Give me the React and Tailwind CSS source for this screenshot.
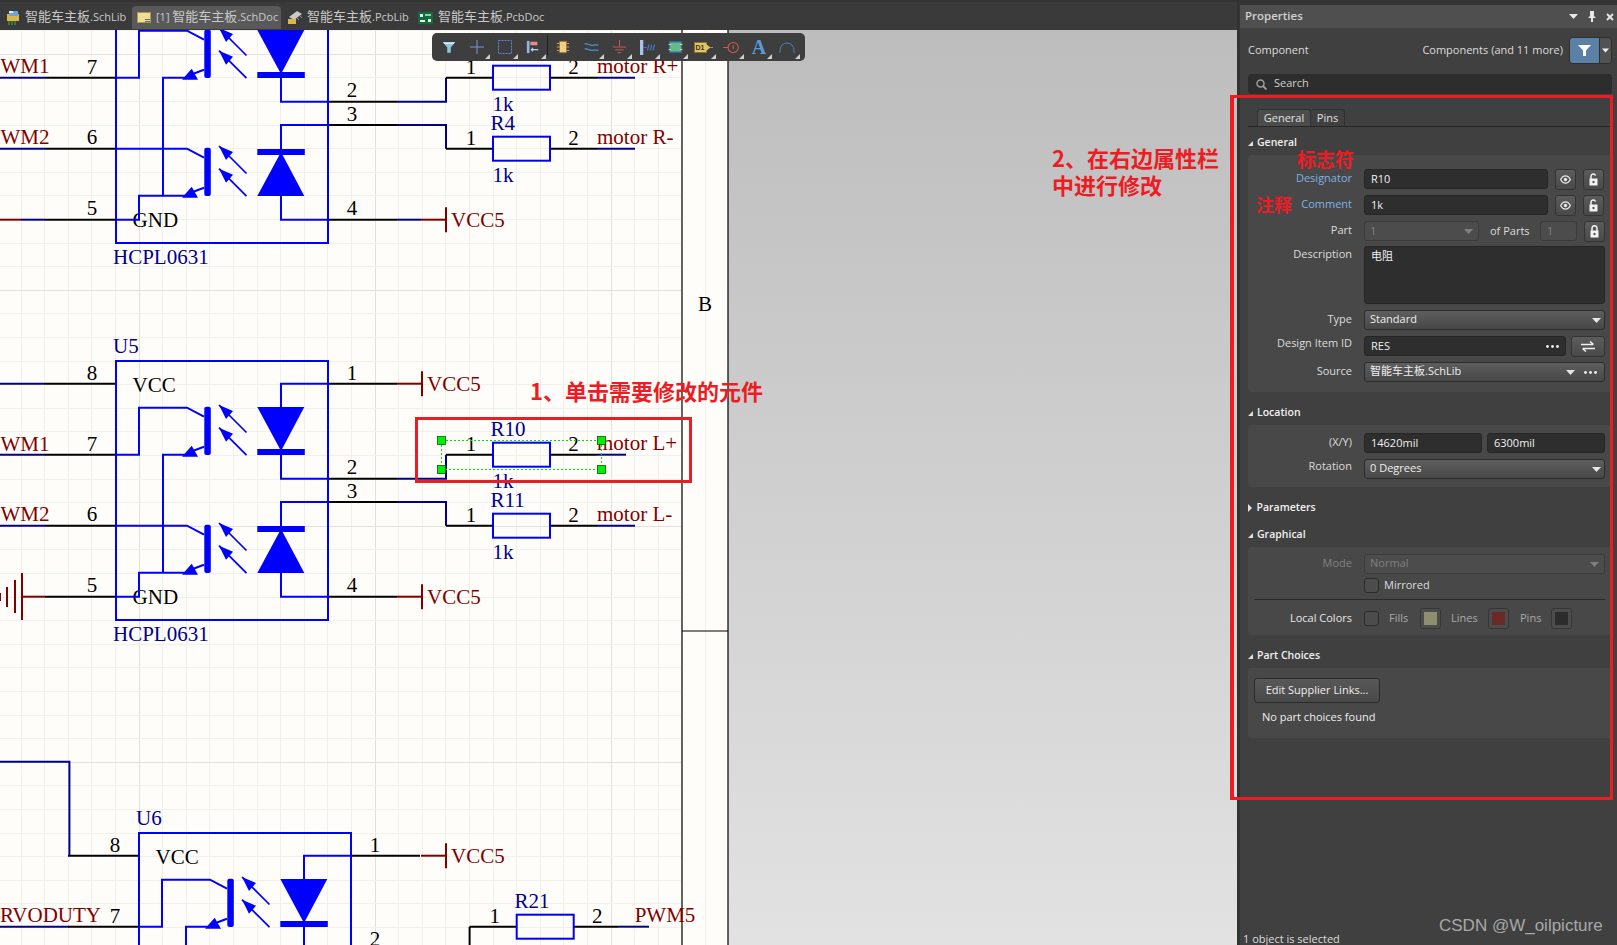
import { Fragment } from 'react'

const serif = { fontFamily: '"Liberation Serif", serif' }
const NAVY = '#00008b'
const BLUE = '#0000ff'
const RED = '#800000'

function W({ p, c = '#000000', w = 2 }) {
  return <polyline points={p} fill="none" stroke={c} strokeWidth={w} />
}

function T({ x, y, c = '#000000', a = 'start', s = 21, children }) {
  return <text x={x} y={y} fill={c} fontSize={s} textAnchor={a} style={serif}>{children}</text>
}

function Grid() {
  const xs = []
  const ys = []
  for (let i = -1; i < 31; i++) xs.push(21 + i * 23.6)
  for (let i = 0; i < 40; i++) ys.push(7 + i * 23.6)
  return (
    <g shapeRendering="crispEdges">
      {xs.map((x, i) => <line key={i} x1={x} x2={x} y1="30" y2="945" stroke={i % 10 === 6 ? '#e2e1dc' : '#f1f0ea'} />)}
      {ys.map((y, i) => <line key={i} x1="0" x2="682" y1={y} y2={y} stroke={i % 10 === 2 ? '#e2e1dc' : '#f1f0ea'} />)}
    </g>
  )
}

function LightArrow({ x, y }) {
  return (
    <g>
      <line x1={x} y1={y} x2={x + 27.5} y2={y + 27.5} stroke={BLUE} strokeWidth="1.7" />
      <polygon points={`${x},${y} ${x + 14},${y + 6} ${x + 7},${y + 14}`} fill={BLUE} />
    </g>
  )
}

function Opto({ dx = 0, dy = 0, name }) {
  return (
    <g transform={`translate(${dx} ${dy})`}>
      {[383.7, 454.7, 525.7, 596.7].map((y) => <W key={y} p={`45,${y} 116,${y}`} />)}
      {[383.7, 478.7, 502, 596.7].map((y) => <W key={y} p={`328,${y} 397,${y}`} />)}
      <rect x="116" y="361" width="212" height="259" fill="none" stroke={BLUE} strokeWidth="2" />
      <T x="92" y="380" a="middle">8</T>
      <T x="92" y="450.7" a="middle">7</T>
      <T x="92" y="521" a="middle">6</T>
      <T x="92" y="592" a="middle">5</T>
      <T x="352" y="380" a="middle">1</T>
      <T x="352" y="474" a="middle">2</T>
      <T x="352" y="498" a="middle">3</T>
      <T x="352" y="592" a="middle">4</T>
      <T x="132.6" y="392">VCC</T>
      <T x="132.6" y="604">GND</T>
      {name && <T x="113" y="353" c={NAVY}>{name}</T>}
      <T x="113" y="640.7" c={NAVY}>HCPL0631</T>

      {/* upper transistor */}
      <W c={BLUE} p="116,454.7 139,454.7 139,407.7 187,407.7 204,416.7" />
      <rect x="204.3" y="406.7" width="6.5" height="48.3" rx="2" fill={BLUE} />
      <W c={BLUE} p="163,572.7 163,454.7 186,454.7" />
      <W c={BLUE} p="190,452 204,446.7" />
      <polygon points="182,456.7 191.7,445.7 198,456.7" fill={BLUE} />
      <LightArrow x={219} y={405} />
      <LightArrow x={219} y={427.7} />

      {/* lower transistor */}
      <W c={BLUE} p="116,525.7 187,525.7 204,534.7" />
      <rect x="204.3" y="524.7" width="6.5" height="48.3" rx="2" fill={BLUE} />
      <W c={BLUE} p="116,596.7 139,596.7 139,572.7 186,572.7" />
      <W c={BLUE} p="190,570 204,564.7" />
      <polygon points="182,574.7 191.7,563.7 198,574.7" fill={BLUE} />
      <LightArrow x={219} y={523} />
      <LightArrow x={219} y={545.7} />

      {/* photodiodes */}
      <W c={BLUE} p="328,383.7 281,383.7 281,407.7" />
      <polygon points="257.3,407 304.3,407 281,451" fill={BLUE} />
      <rect x="257.3" y="449" width="47.5" height="6" fill={BLUE} />
      <W c={BLUE} p="281,454 281,478.7 328,478.7" />
      <W c={BLUE} p="328,502 281,502 281,527" />
      <rect x="257.3" y="526" width="47.5" height="6" fill={BLUE} />
      <polygon points="281,529 304.3,573 257.3,573" fill={BLUE} />
      <W c={BLUE} p="281,572 281,596.7 328,596.7" />
    </g>
  )
}

function Res({ x, y, name, value = '1k', net, netX, blackEnd, end, nameX }) {
  return (
    <g>
      <W p={`${x - 47},${y} ${x},${y}`} />
      <W p={`${x + 57},${y} ${blackEnd},${y}`} />
      <W c={NAVY} p={`${blackEnd},${y} ${end},${y}`} />
      <rect x={x} y={y - 12} width="57" height="24" fill="none" stroke={BLUE} strokeWidth="2" />
      <T x={x - 22} y={y - 4} a="middle">1</T>
      <T x={x + 80.5} y={y - 4} a="middle">2</T>
      <T x={nameX ?? x - 2.5} y={y - 18.7} c={NAVY}>{name}</T>
      <T x={x - 0.5} y={y + 33.5} c={NAVY}>{value}</T>
      <T x={netX} y={y - 5} c={RED}>{net}</T>
    </g>
  )
}

function Vcc({ x, y }) {
  return (
    <g>
      <W c={RED} p={`${x - 25},${y} ${x},${y}`} />
      <W c={RED} p={`${x},${y - 12.5} ${x},${y + 12.5}`} />
      <T x={x + 5} y={y + 7} c={RED}>VCC5</T>
    </g>
  )
}

function Schematic() {
  return (
    <svg width="729" height="915" viewBox="0 30 729 915" className="block shrink-0">
      <rect x="0" y="30" width="728" height="915" fill="#fffdf9" />
      <Grid />
      <line x1="682" x2="682" y1="30" y2="945" stroke="#000" strokeWidth="1.2" />
      <line x1="728" x2="728" y1="30" y2="945" stroke="#000" strokeWidth="1.2" />
      <line x1="682" x2="728" y1="631" y2="631" stroke="#000" strokeWidth="1.2" />
      <T x="705" y="311" a="middle">B</T>

      {/* first block */}
      <Opto dy={-377} />
      <W c={NAVY} p="0,77.7 45,77.7" />
      <W c={NAVY} p="0,148.7 45,148.7" />
      <W c={RED} p="0,219.7 21,219.7" />
      <W c={NAVY} p="21,219.7 45,219.7" />
      <T x="0.5" y="72.7" c={RED}>WM1</T>
      <T x="0.5" y="144" c={RED}>WM2</T>
      <W c={NAVY} p="397,101.7 446,101.7 446,77.7" />
      <W c={NAVY} p="397,125 446,125 446,148.7" />
      <W c={NAVY} p="397,219.7 421,219.7" />
      <Vcc x={446} y={219.7} />
      <Res x={493} y={77.7} name="R3" net="motor R+" netX={597} blackEnd={597} end={635} />
      <Res x={493} y={148.7} name="R4" net="motor R-" netX={597} blackEnd={597} end={635} />

      {/* U5 */}
      <Opto name="U5" />
      <W c={NAVY} p="0,383.7 45,383.7" />
      <W c={NAVY} p="0,454.7 45,454.7" />
      <W c={NAVY} p="0,525.7 45,525.7" />
      <W c={RED} p="22,596.7 45,596.7" />
      <T x="0.5" y="450.7" c={RED}>WM1</T>
      <T x="0.5" y="521" c={RED}>WM2</T>
      <line x1="22" x2="22" y1="573" y2="620" stroke={RED} strokeWidth="2" />
      <line x1="15" x2="15" y1="580" y2="613" stroke={RED} strokeWidth="2" />
      <line x1="7" x2="7" y1="587" y2="607" stroke={RED} strokeWidth="2" />
      <line x1="0" x2="0" y1="593" y2="601" stroke={RED} strokeWidth="2" />
      <Vcc x={422} y={383.7} />
      <Vcc x={422} y={596.7} />
      <W c={NAVY} p="397,478.7 446,478.7 446,454.7" />
      <W c={NAVY} p="397,502 446,502 446,525.7" />
      <Res x={493} y={454.7} name="R10" net="motor L+" netX={597} blackEnd={597} end={626} />
      <Res x={493} y={525.7} name="R11" net="motor L-" netX={597} blackEnd={597} end={635} />

      {/* selection of R10 */}
      <rect x="441.5" y="440.5" width="160" height="29" fill="none" stroke="#00e000" strokeWidth="1" strokeDasharray="2 2" shapeRendering="crispEdges" />
      {[[441.5, 440.5], [601.5, 440.5], [441.5, 469.5], [601.5, 469.5]].map(([x, y]) => (
        <rect key={`${x}-${y}`} x={x - 4} y={y - 4} width="8" height="8" fill="#00f000" stroke="#006000" strokeWidth="0.8" />
      ))}

      {/* U6 */}
      <Opto dx={23} dy={472} name="U6" />
      <W c={NAVY} p="0,761.7 69.4,761.7 69.4,855.7" />
      <W c={NAVY} p="0,926.7 69,926.7" />
      <T x="0" y="921.7" c={RED}>RVODUTY</T>
      <Vcc x={446} y={855.7} />
      <W p="469.6,945 469.6,926.7" />
      <Res x={516.7} y={926.7} name="R21" nameX={514.4} net="PWM5" netX={634.7} blackEnd={618} end={649} />
    </svg>
  )
}

function Corner() {
  return (
    <svg width="5" height="5" viewBox="0 0 5 5" className="absolute right-[1px] bottom-[2px]">
      <polygon points="5,0 5,5 0,5" fill="#cfcfcf" />
    </svg>
  )
}

function ToolBtn({ corner = true, children }) {
  return (
    <div className="relative w-[28px] h-[28px] flex items-center justify-center">
      {children}
      {corner && <Corner />}
    </div>
  )
}

function Toolbar() {
  return (
    <div className="absolute left-[432px] top-[3px] w-[373px] h-[28px] pl-[3px] flex rounded-[5px] bg-[#3e3e3e]">
      <ToolBtn corner={false}>
        <svg width="14" height="13" viewBox="0 0 16 14"><path d="M1 1h14L10 7v6H6V7z" fill="#8fc6dc" /><path d="M1 1h14l-2 2H3z" fill="#d4ecf5" /></svg>
      </ToolBtn>
      <ToolBtn>
        <svg width="16" height="16" viewBox="0 0 16 16"><path d="M8 1v14M1 8h14" stroke="#6f9bdc" strokeWidth="1" fill="none" /></svg>
      </ToolBtn>
      <ToolBtn>
        <svg width="16" height="16" viewBox="0 0 16 16"><rect x="1.5" y="1.5" width="13" height="13" fill="none" stroke="#5d86dc" strokeWidth="1" strokeDasharray="2 1" /></svg>
      </ToolBtn>
      <ToolBtn>
        <svg width="14" height="14" viewBox="0 0 16 16"><rect x="1" y="1" width="3" height="14" fill="#8fb6e6" /><rect x="5" y="2" width="8" height="4" fill="#e98a8a" /><path d="M14 11H6M8 9l-2 2 2 2" stroke="#b9d4ef" strokeWidth="1.2" fill="none" /></svg>
      </ToolBtn>
      <div className="w-[2px] flex items-center"><div className="w-[1px] h-[20px] mt-[-4px] bg-[#1f1f1f]" /></div>
      <ToolBtn corner={false}>
        <svg width="16" height="14" viewBox="0 0 16 16"><rect x="4" y="1.5" width="8" height="13" fill="#f2cf82" stroke="#8d7434" /><path d="M1 4h3M1 8h3M1 12h3M12 4h3M12 8h3M12 12h3" stroke="#c8a24c" strokeWidth="1.2" /></svg>
      </ToolBtn>
      <ToolBtn>
        <svg width="17" height="12" viewBox="0 0 18 14"><path d="M1 3c4 0 5 2 8 2s4-1 8 0M1 9c4 0 5 2 8 2s4-1 8 0" stroke="#4f92cc" strokeWidth="1.5" fill="none" /></svg>
      </ToolBtn>
      <ToolBtn>
        <svg width="15" height="15" viewBox="0 0 16 16"><path d="M8 0v7M1 7.5h14M3.5 10.5h9M6 13.5h4" stroke="#d8564e" strokeWidth="1" fill="none" /></svg>
      </ToolBtn>
      <ToolBtn>
        <svg width="17" height="15" viewBox="0 0 18 16"><rect x="1" y="0" width="3.5" height="16" fill="#a4c6ee" /><path d="M5 8h3M9 11l1.5-6M12 11l1.5-6M15 11l1.5-6" stroke="#4a78c8" strokeWidth="1.3" fill="none" /></svg>
      </ToolBtn>
      <ToolBtn>
        <svg width="15" height="12" viewBox="0 0 16 14"><rect x="1" y="1" width="14" height="12" fill="#64b98a" stroke="#2f6fae" strokeWidth="1.5" /><path d="M0 4h3M0 10h3M13 4h3M13 10h3" stroke="#e6d27c" strokeWidth="1.2" /></svg>
      </ToolBtn>
      <ToolBtn>
        <div className="flex items-center">
          <div className="w-[13px] h-[11px] bg-[#e2c465] border border-[#8d7434] text-[7px] leading-[9px] font-bold text-[#3a2f10] text-center [font-family:'Liberation_Sans',sans-serif]">D1</div>
          <svg width="7" height="9" viewBox="0 0 8 10" className="-ml-px"><polygon points="0,1 5,5 0,9" fill="#e2c465" /><path d="M5 5h3" stroke="#c8a24c" /></svg>
        </div>
      </ToolBtn>
      <ToolBtn>
        <svg width="17" height="13" viewBox="0 0 20 14"><circle cx="12" cy="7" r="6" fill="none" stroke="#d8564e" strokeWidth="1.2" /><path d="M0 7h6M12 4v5" stroke="#d8564e" strokeWidth="1.2" /></svg>
      </ToolBtn>
      <ToolBtn>
        <span className="text-[20px] leading-none font-bold text-[#5a9ad8] [font-family:'Liberation_Serif',serif]">A</span>
      </ToolBtn>
      <ToolBtn>
        <svg width="16" height="12" viewBox="0 0 16 12"><path d="M1 12V9a7 7 0 0 1 14 0v3" fill="none" stroke="#4f7fb8" strokeWidth="1" /></svg>
      </ToolBtn>
    </div>
  )
}

function SchLibIcon() {
  return (
    <svg width="14" height="16" viewBox="0 0 14 16"><rect x="1" y="4" width="12" height="7" fill="#d9b84a" /><rect x="3" y="1" width="9" height="5" fill="#6fa3d8" /><rect x="3" y="1" width="4" height="2" fill="#dfeaf5" /><path d="M3 11v4M6 11v4M9 11v4" stroke="#3f8f3f" strokeWidth="1.4" /></svg>
  )
}

function SchDocIcon() {
  return (
    <svg width="14" height="11" viewBox="0 0 14 11"><rect x="0.5" y="0.5" width="13" height="10" fill="#f1dd92" stroke="#a89858" /><path d="M8 7.5h5M8 9.5h5" stroke="#6a6a6a" /></svg>
  )
}

function PcbLibIcon() {
  return (
    <svg width="16" height="15" viewBox="0 0 16 15"><polygon points="2,7 10,1 15,4 7,10" fill="#c9c9c9" /><rect x="1" y="9" width="8" height="5" fill="#d9b84a" /><path d="M10 8l2 2M13 6l2 2" stroke="#9a9a9a" /></svg>
  )
}

function PcbDocIcon() {
  return (
    <svg width="15" height="12" viewBox="0 0 15 12"><rect width="15" height="12" fill="#0f6d3c" /><rect x="2" y="2" width="3" height="3" fill="#e8f2e8" /><rect x="7" y="2" width="6" height="2" fill="#8fd0a8" /><rect x="2" y="8" width="5" height="2" fill="#e8f2e8" /><rect x="10" y="7" width="3" height="3" fill="#e8f2e8" /></svg>
  )
}

function Tab({ icon, label, active, className }) {
  return (
    <div className={`h-[23px] mb-px flex items-center text-[#c9c9c9] ${active ? 'bg-[#595959] rounded-t-[4px]' : ''} ${className}`}>
      {icon}
      <span className="-mt-[2px] whitespace-nowrap text-[11px] leading-[16px]">{label}</span>
    </div>
  )
}

function Doc({ ext }) {
  return <Fragment><span className="text-[13px]">智能车主板</span>{ext}</Fragment>
}

function Tabs() {
  return (
    <div className="h-[30px] flex items-end bg-[#3a3a3a] border-t-[2px] border-[#333333]">
      <Tab className="w-[132px] pl-[6px] gap-[5px]" icon={<SchLibIcon />} label={<Doc ext=".SchLib" />} />
      <Tab active className="w-[149px] pl-[5px] gap-[5px]" icon={<SchDocIcon />} label={<Fragment>[1] <Doc ext=".SchDoc" /></Fragment>} />
      <Tab className="w-[131px] pl-[6px] gap-[4px]" icon={<PcbLibIcon />} label={<Doc ext=".PcbLib" />} />
      <Tab className="pl-[6px] gap-[5px]" icon={<PcbDocIcon />} label={<Doc ext=".PcbDoc" />} />
    </div>
  )
}

function Caret({ color = '#e6e6e6', className = '' }) {
  return (
    <svg width="9" height="5" viewBox="0 0 9 5" className={`shrink-0 ${className}`}><polygon points="0,0 9,0 4.5,5" fill={color} /></svg>
  )
}

function Dots() {
  return (
    <svg width="13" height="3" viewBox="0 0 13 3" className="shrink-0"><circle cx="1.5" cy="1.5" r="1.4" fill="#eee" /><circle cx="6.5" cy="1.5" r="1.4" fill="#eee" /><circle cx="11.5" cy="1.5" r="1.4" fill="#eee" /></svg>
  )
}

function Section({ title, open = true, className = '' }) {
  return (
    <div className={`h-[16px] flex items-center font-semibold text-[#f0f0f0] text-[10.5px] ${className}`}>
      {open ? (
        <svg width="5" height="5" viewBox="0 0 5 5"><polygon points="5,0 5,5 0,5" fill="#e0e0e0" /></svg>
      ) : (
        <svg width="4" height="8" viewBox="0 0 4 8"><polygon points="0,0 4,4 0,8" fill="#e0e0e0" /></svg>
      )}
      <span className={`-mt-[1px] ${open ? 'ml-[4px]' : 'ml-[4.5px]'}`}>{title}</span>
    </div>
  )
}

function Row({ label, labelClass = 'text-[#dcdcdc] -mt-[2px]', children }) {
  return (
    <div className="flex items-center h-[20px]">
      <div className={`w-[98px] mr-[12px] text-right whitespace-nowrap ${labelClass}`}>{label}</div>
      {children}
    </div>
  )
}

function Input({ children, className = '' }) {
  return (
    <div className={`h-[20px] px-[6px] flex items-center rounded-[3px] bg-[#2e2e2e] border border-[#262626] text-[#eeeeee] ${className}`}>
      {children}
    </div>
  )
}

function Select({ children, className = '', extra }) {
  return (
    <div className={`h-[20px] pl-[5px] pr-[3px] flex items-center justify-between rounded-[3px] border border-[#2b2b2b] bg-gradient-to-b from-[#5e5e5e] to-[#474747] text-[#eeeeee] ${className}`}>
      <span className="-mt-[2px]">{children}</span>
      {extra || <Caret />}
    </div>
  )
}

function IconBtn({ children, className = 'w-[21px]' }) {
  return (
    <div className={`h-[21px] flex items-center justify-center rounded-[3px] border border-[#333333] bg-gradient-to-b from-[#5c5c5c] to-[#494949] ${className}`}>
      {children}
    </div>
  )
}

function Eye() {
  return (
    <svg width="11" height="9" viewBox="0 0 11 9"><path d="M0.7 4.5C2 1.8 3.7 0.8 5.5 0.8s3.5 1 4.8 3.7C9 7.2 7.3 8.200 5.5 8.2S2 7.2 0.7 4.5z" fill="none" stroke="#e8e8e8" strokeWidth="1.3" /><circle cx="5.5" cy="4.5" r="1.7" fill="#e8e8e8" /></svg>
  )
}

function Lock({ open }) {
  return (
    <svg width="9" height="13" viewBox="0 0 9 13">
      <path d={open ? 'M2 6V3.2a2.3 2.3 0 0 1 4.5-.6' : 'M2 6V3.2a2.5 2.5 0 0 1 5 0V6'} fill="none" stroke="#f2f2f2" strokeWidth="1.5" />
      <path fillRule="evenodd" d="M0.5 5.5h8v7h-8zM4.5 7.8a1.2 1.2 0 1 0 .01 0z" fill="#f2f2f2" />
    </svg>
  )
}

function Swatch({ color }) {
  return (
    <div className="w-[21px] h-[21px] p-[3px] rounded-[3px] border border-[#363636] bg-[#4c4c4c]">
      <div className="w-full h-full" style={{ backgroundColor: color }} />
    </div>
  )
}

function Check() {
  return <div className="w-[15px] h-[15px] rounded-[3px] border border-[#2b2b2b] bg-[#4c4c4c]" />
}

function Properties() {
  return (
    <aside className="w-[377px] h-full flex flex-col bg-[#404040] text-[11px] [font-family:'Open_Sans','Noto_Sans_CJK_SC',sans-serif] overflow-hidden">
      <div className="h-[5px] shrink-0 bg-[#333333]" />
      <header className="h-[23px] shrink-0 pl-[5px] flex items-center bg-[#4f4f4f]">
        <span className="font-semibold text-[11.5px] -mt-[2px] text-[#d2d2d2]">Properties</span>
        <div className="ml-auto flex items-center gap-[10px] pr-[3px]">
          <Caret color="#e8e8e8" />
          <svg width="8" height="11" viewBox="0 0 8 11"><path d="M2 0h4v5l2 2H5v4H3V7H0l2-2z" fill="#e8e8e8" /></svg>
          <svg width="8" height="8" viewBox="0 0 8 8"><path d="M1 1l6 6M7 1L1 7" stroke="#e8e8e8" strokeWidth="1.8" /></svg>
        </div>
      </header>

      <div className="flex-1 pl-[8px] pr-[5px]">
        <div className="mt-[9px] h-[27px] flex items-center text-[#dcdcdc]">
          <span className="-mt-[1px]">Component</span>
          <span className="ml-auto mr-[6px] -mt-[1px]">Components (and 11 more)</span>
          <div className="w-[43px] h-[27px] flex rounded-[4px] border border-[#2f2f2f] overflow-hidden">
            <div className="w-[29px] flex items-center justify-center bg-[#5b82a6]">
              <svg width="13" height="11" viewBox="0 0 13 11"><path d="M0 0h13L8 5.5V11H5V5.5z" fill="#ffffff" /></svg>
            </div>
            <div className="flex-1 flex items-center justify-center bg-[#525252] border-l border-[#2f2f2f]"><Caret color="#f0f0f0" className="w-[7px]" /></div>
          </div>
        </div>

        <div className="mt-[10px] h-[20px] pl-[8px] flex items-center gap-[7px] rounded-[3px] bg-[#2d2d2d] text-[#cfcfcf]">
          <svg width="11" height="11" viewBox="0 0 11 11"><circle cx="4.5" cy="4.5" r="3.5" fill="none" stroke="#9d9d9d" strokeWidth="1.5" /><path d="M7 7l3.5 3.5" stroke="#9d9d9d" strokeWidth="1.8" /></svg>
          <span className="-mt-[2px]">Search</span>
        </div>

        <div className="mt-[15px] h-[18px] pl-[9px] mr-[2px] flex border-b border-[#262626]">
          <div className="w-[54px] flex items-center justify-center rounded-t-[3px] border border-b-0 border-[#303030] bg-[#4c4c4c] text-[#e0e0e0]">General</div>
          <div className="w-[34px] flex items-center justify-center rounded-t-[3px] border border-b-0 border-l-0 border-[#303030] text-[#e0e0e0]">Pins</div>
        </div>

        <Section title="General" className="mt-[8px] mb-[4px]" />
        <div className="rounded-[3px] bg-[#484848] pt-[14px] pb-[10px] pl-[6px] pr-[7px] flex flex-col gap-[6px]">
          <Row label="Designator" labelClass="text-[#7fb2e5] -mt-[2px]">
            <Input className="w-[184px] mr-[7px]">R10</Input>
            <IconBtn className="w-[21px] mr-[7px]"><Eye /></IconBtn>
            <IconBtn><Lock open /></IconBtn>
          </Row>
          <Row label="Comment" labelClass="text-[#7fb2e5] -mt-[2px]">
            <Input className="w-[184px] mr-[7px]">1k</Input>
            <IconBtn className="w-[21px] mr-[7px]"><Eye /></IconBtn>
            <IconBtn><Lock open /></IconBtn>
          </Row>
          <Row label="Part">
            <div className="w-[115px] h-[20px] px-[5px] flex items-center justify-between rounded-[3px] border border-[#3b3b3b] bg-[#4c4c4c] text-[#808080]">
              <span>1</span>
              <Caret color="#808080" />
            </div>
            <span className="ml-[11px] text-[#dcdcdc]">of Parts</span>
            <div className="ml-auto w-[37px] h-[20px] px-[6px] flex items-center rounded-[3px] border border-[#3b3b3b] bg-[#4c4c4c] text-[#808080] mr-[7px]">1</div>
            <IconBtn><Lock /></IconBtn>
          </Row>
          <div className="flex items-start h-[58px] -mt-[1px]">
            <div className="w-[98px] mr-[12px] text-right text-[#dcdcdc]">Description</div>
            <div className="flex-1 h-[58px] px-[6px] py-[1px] rounded-[3px] bg-[#2e2e2e] border border-[#262626] text-[#eeeeee]">电阻</div>
          </div>
          <Row label="Type"><Select className="flex-1">Standard</Select></Row>
          <Row label="Design Item ID" labelClass="text-[#dcdcdc] -mt-[5px]">
            <Input className="flex-1 justify-between mr-[5px]"><span>RES</span><Dots /></Input>
            <IconBtn className="w-[34px]">
              <svg width="14" height="11" viewBox="0 0 14 11"><path d="M0 3.5h12M9 0.5l3.500 3M14 7.5H2M5 10.5l-3.500-3" stroke="#f0f0f0" strokeWidth="1.5" fill="none" /></svg>
            </IconBtn>
          </Row>
          <Row label="Source">
            <Select className="flex-1" extra={<span className="flex items-center gap-[9px] pr-[4px]"><Caret /><Dots /></span>}>智能车主板.SchLib</Select>
          </Row>
        </div>

        <Section title="Location" className="mt-[13px] mb-[4px]" />
        <div className="rounded-[3px] bg-[#484848] py-[8px] pl-[6px] pr-[7px] flex flex-col gap-[6px]">
          <Row label="(X/Y)">
            <Input className="w-[118px] mr-[5px]">14620mil</Input>
            <Input className="flex-1">6300mil</Input>
          </Row>
          <Row label="Rotation" labelClass="text-[#dcdcdc] -mt-[5px]"><Select className="flex-1">0 Degrees</Select></Row>
        </div>

        <Section title="Parameters" open={false} className="mt-[13px]" />

        <Section title="Graphical" className="mt-[11px] mb-[4px]" />
        <div className="rounded-[3px] bg-[#484848] pt-[7px] pb-[6px] pl-[6px] pr-[7px]">
          <Row label="Mode" labelClass="text-[#808080] -mt-[2px]">
            <div className="flex-1 h-[20px] px-[5px] flex items-center justify-between rounded-[3px] border border-[#3b3b3b] bg-[#4c4c4c] text-[#808080]">
              <span className="-mt-[1px]">Normal</span>
              <Caret color="#808080" />
            </div>
          </Row>
          <div className="mt-[4px] ml-[110px] h-[15px] flex items-center gap-[5px] text-[#dcdcdc]">
            <Check />
            <span>Mirrored</span>
          </div>
          <div className="mt-[6px] h-px bg-[#2a2a2a]" />
          <div className="mt-[8px] h-[21px] flex items-center">
            <div className="w-[98px] mr-[12px] text-right text-[#e6e6e6]">Local Colors</div>
            <Check />
            <span className="ml-[10px] w-[31px] text-[#a8a8a8]">Fills</span>
            <Swatch color="#8f8f6f" />
            <span className="ml-[10px] w-[37px] text-[#a8a8a8]">Lines</span>
            <Swatch color="#6b2a2a" />
            <span className="ml-[11px] w-[31px] text-[#a8a8a8]">Pins</span>
            <Swatch color="#2c2c2c" />
          </div>
        </div>

        <Section title="Part Choices" className="mt-[13px] mb-[4px]" />
        <div className="rounded-[3px] bg-[#484848] pt-[10px] pb-[13px] pl-[6px] text-[#eeeeee]">
          <div className="w-[126px] h-[25px] flex items-center justify-center rounded-[3px] border border-[#2b2b2b] bg-gradient-to-b from-[#585858] to-[#484848]">Edit Supplier Links...</div>
          <div className="mt-[6px] h-[16px] ml-[8px] flex items-center">No part choices found</div>
        </div>
      </div>

      <div className="h-[12px] pl-[3px] leading-[12px] text-[#dcdcdc] shrink-0">1 object is selected</div>
    </aside>
  )
}

export default function App() {
  const noteCls = "absolute whitespace-nowrap font-bold text-[#ed1c24] [font-family:'Noto_Sans_CJK_SC',sans-serif]"
  return (
    <div className="relative w-[1617px] h-[945px] flex overflow-hidden bg-[#333333]">
      <div className="w-[1237px] h-full flex flex-col [font-family:'Open_Sans','Noto_Sans_CJK_SC',sans-serif]">
        <Tabs />
        <div className="relative flex-1 bg-gradient-to-b from-[#bdbdbd] to-[#e2e2e2] overflow-hidden">
          <Schematic />
          <Toolbar />
        </div>
      </div>
      <div className="w-[3px] h-full bg-[#333333]" />
      <Properties />

      {/* hand annotations on top of the screenshot */}
      <div className="absolute left-[415px] top-[417px] w-[277px] h-[66px] border-[3px] border-[#ed1c24]" />
      <div className="absolute left-[1230px] top-[95px] w-[383px] h-[705px] border-[3px] border-l-[4px] border-[#ed1c24]" />
      <span className={`${noteCls} left-[530px] top-[375px] text-[22px] leading-[30px]`}>1、单击需要修改的元件</span>
      <div className={`${noteCls} left-[1052px] top-[145px] text-[22px] leading-[27px] -mt-[1px]`}>2、在右边属性栏<br />中进行修改</div>
      <span className={`${noteCls} left-[1297px] top-[147px] text-[19px] leading-[24px]`}>标志符</span>
      <span className={`${noteCls} left-[1256px] top-[192px] text-[18px] leading-[24px]`}>注释</span>
      <span className="absolute left-[1439px] top-[915px] text-[17px] leading-[22px] whitespace-nowrap text-[#a8a8a8] [font-family:'Liberation_Sans',sans-serif]">CSDN @W_oilpicture</span>
    </div>
  )
}
